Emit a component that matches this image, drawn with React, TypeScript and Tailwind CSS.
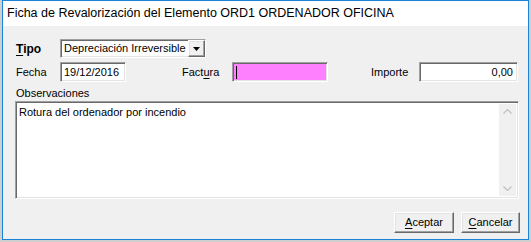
import React from "react";

const sunken =
  "border border-t-[#a0a0a0] border-l-[#a0a0a0] border-b-white border-r-white shadow-[inset_1px_1px_0_#696969,inset_-1px_-1px_0_#e3e3e3]";
const raised =
  "border border-t-white border-l-white border-b-[#696969] border-r-[#696969] shadow-[inset_-1px_-1px_0_#a0a0a0,inset_1px_1px_0_#e3e3e3] bg-[#f0f0f0]";

const Btn = ({ k, rest, w }: { k: string; rest: string; w: string }) => (
  <div className={`${raised} ${w} h-[21px] flex items-center justify-center text-black`}>
    <span>
      <span className="underline underline-offset-2">{k}</span>
      {rest}
    </span>
  </div>
);

export default function App() {
  return (
    <div
      className="w-[531px] h-[242px] bg-[#cfcfcf] pl-[2px] text-[11px] text-black"
      style={{ fontFamily: '"Liberation Sans", Arial, sans-serif' }}
    >
      <div className="w-[527px] h-[240px] border border-[#1883d7] bg-[#f0f0f0] flex flex-col">
        {/* Title bar */}
        <div className="h-[25px] bg-white flex items-center pl-[4px] text-[12.5px] text-black">
          Ficha de Revalorización del Elemento ORD1 ORDENADOR OFICINA
        </div>

        <div className="flex flex-col pl-[13px] pt-[13px]">
          {/* Tipo */}
          <div className="flex items-center h-[19px]">
            <div className="w-[44px] font-bold text-[12px]">
              <span className="underline underline-offset-2">T</span>ipo
            </div>
            <div className={`${sunken} w-[146px] h-[19px] bg-white flex items-center justify-between`}>
              <span className="pl-[3px] leading-none">Depreciación Irreversible</span>
              <div className={`${raised} w-[17px] h-[17px] flex items-center justify-center`}>
                <svg width="7" height="4" viewBox="0 0 7 4">
                  <path d="M0 0h7L3.5 4z" fill="#000" />
                </svg>
              </div>
            </div>
          </div>

          {/* Fecha / Factura / Importe */}
          <div className="flex items-center h-[20px] mt-[4px]">
            <div className="w-[44px]">Fecha</div>
            <div className={`${sunken} w-[66px] h-[20px] bg-white flex items-center pl-[3px]`}>19/12/2016</div>
            <div className="w-[50px] ml-[56px]">
              Fact<span className="underline underline-offset-2">u</span>ra
            </div>
            <div className={`${sunken} w-[96px] h-[20px] bg-[#ff80ff] flex items-center pl-[3px]`}>
              <div className="w-px h-[13px] bg-black" />
            </div>
            <div className="w-[48px] ml-[43px]">Importe</div>
            <div className={`${sunken} w-[99px] h-[20px] bg-white flex items-center justify-end pr-[4px]`}>0,00</div>
          </div>

          {/* Observaciones */}
          <div className="mt-[5px] h-[13px] leading-[13px]">Observaciones</div>
          <div className={`${sunken} ml-[-1px] mt-[1px] w-[504px] h-[98px] bg-white flex`}>
            <div className="flex-1 pl-[3px] pt-[2px]">Rotura del ordenador por incendio</div>
            <div className="w-[17px] my-[2px] mr-[2px] bg-[#f0f0f0] flex flex-col justify-between items-center py-[5px]">
              <svg width="9" height="5" viewBox="0 0 9 5">
                <path d="M0.5 4.5L4.5 0.5L8.5 4.5" fill="none" stroke="#c0c0c0" strokeWidth="1.2" />
              </svg>
              <svg width="9" height="5" viewBox="0 0 9 5">
                <path d="M0.5 0.5L4.5 4.5L8.5 0.5" fill="none" stroke="#c0c0c0" strokeWidth="1.2" />
              </svg>
            </div>
          </div>

          {/* Buttons */}
          <div className="flex justify-end gap-[7px] mt-[13px] pr-[8px]">
            <Btn k="A" rest="ceptar" w="w-[60px]" />
            <Btn k="C" rest="ancelar" w="w-[59px]" />
          </div>
        </div>
      </div>
    </div>
  );
}
